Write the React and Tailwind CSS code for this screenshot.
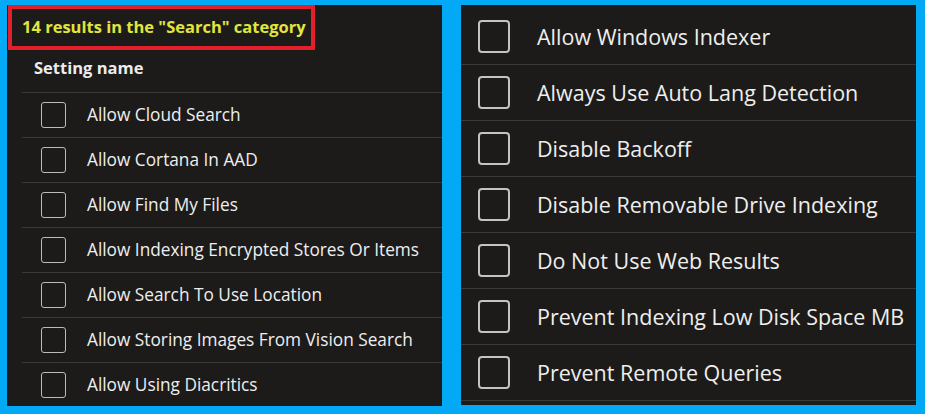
import React from "react";

const leftItems = [
  "Allow Cloud Search",
  "Allow Cortana In AAD",
  "Allow Find My Files",
  "Allow Indexing Encrypted Stores Or Items",
  "Allow Search To Use Location",
  "Allow Storing Images From Vision Search",
  "Allow Using Diacritics",
];

const rightItems = [
  "Allow Windows Indexer",
  "Always Use Auto Lang Detection",
  "Disable Backoff",
  "Disable Removable Drive Indexing",
  "Do Not Use Web Results",
  "Prevent Indexing Low Disk Space MB",
  "Prevent Remote Queries",
];

const font = { fontFamily: '"Open Sans", "Noto Sans", sans-serif' };

const App = () => {
  return (
    <div
      className="w-[925px] h-[414px] bg-[#03a9f4] flex items-start pt-[5px] pl-[7px] gap-[19px] overflow-hidden"
      style={font}
    >
      {/* Left panel */}
      <div className="w-[435px] h-[401px] bg-[#1c1b1a] flex flex-col overflow-hidden">
        <div className="ml-px w-[307px] h-[45px] shrink-0 border-4 border-[#e3202a] flex items-center pl-[10px]">
          <span className="text-[16.5px] font-bold text-[#e1e63c] whitespace-nowrap">
            14 results in the "Search" category
          </span>
        </div>
        <div className="h-[42px] shrink-0 flex items-center pl-[27px] pb-[6px] text-[16.5px] font-bold text-[#ececec]">
          Setting name
        </div>
        <div className="ml-[15px] flex flex-col">
          {leftItems.map((item) => (
            <div
              key={item}
              className="h-[45px] shrink-0 border-t border-[#3a3938] flex items-center pl-[19px]"
            >
              <div className="w-[25px] h-[26px] shrink-0 border-[1.5px] border-[#bdbcbb] rounded-[3px]" />
              <span className="ml-[21px] text-[17.25px] text-[#eeeeee] whitespace-nowrap">
                {item}
              </span>
            </div>
          ))}
        </div>
      </div>

      {/* Right panel */}
      <div className="w-[455px] h-[400px] bg-[#1c1b1a] flex flex-col overflow-hidden pt-[4px]">
        {rightItems.map((item) => (
          <div
            key={item}
            className="h-[56px] shrink-0 border-b border-[#3a3938] flex items-center pl-[17px]"
          >
            <div className="w-[32px] h-[33px] shrink-0 border-2 border-[#c4c3c2] rounded-[4px]" />
            <span className="ml-[27px] pt-[2px] text-[21.5px] text-[#eeeeee] whitespace-nowrap">
              {item}
            </span>
          </div>
        ))}
      </div>
    </div>
  );
};

export default App;
